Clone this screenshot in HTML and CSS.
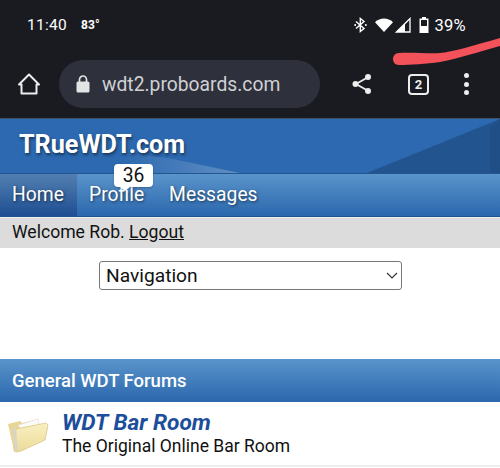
FILE: index.html
```html
<!DOCTYPE html>
<html lang="en">
<head>
    <meta charset="UTF-8">
    <meta name="viewport" content="width=device-width, initial-scale=1.0">
    <title>TRueWDT.com</title>
    <link rel="stylesheet" href="styles.css">
</head>
<body>
    <div class="chrome">
        <div class="status-bar">
            <div class="status-left">
                <span class="clock">11:40</span>
                <span class="temp">83°</span>
            </div>
            <div class="status-right">
                <svg class="ico-bt" width="13" height="16" viewBox="0 0 13 16"><path d="M2 4.500l8 7-3.700 3V1.500l3.700 3-8 7" fill="none" stroke="#fff" stroke-width="1.400"/><circle cx="1.200" cy="8" r="1" fill="#fff"/><circle cx="11.800" cy="8" r="1" fill="#fff"/></svg>
                <svg class="ico-wifi" width="18" height="14" viewBox="0 0 18 14"><path d="M0 4.200C5-.8 13-.8 18 4.200L9 14z" fill="#fff"/></svg>
                <svg class="ico-signal" width="16" height="16" viewBox="0 0 16 16"><path d="M15 1.500V15H1.500z" fill="none" stroke="#fff" stroke-width="1.300"/><path d="M10 6.500V15H1.500z" fill="#fff"/></svg>
                <svg class="ico-batt" width="10" height="16" viewBox="0 0 10 16"><path d="M3 0h4v1.500h2.500V16H.5V1.500H3z" fill="#fff"/><rect x="2" y="3" width="6" height="6" fill="#1a1b20"/></svg>
                <span class="batt-pct">39%</span>
            </div>
        </div>
        <div class="toolbar">
            <svg class="ico-home" width="24" height="24" viewBox="0 0 24 24"><path d="M2 12.500L12 2.500l10 10h-2.500v9h-15v-9z" fill="none" stroke="#eceded" stroke-width="2" stroke-linejoin="round"/></svg>
            <div class="url-pill">
                <svg width="14" height="18" viewBox="0 0 14 18"><rect x="0.500" y="6.500" width="13" height="11" rx="1.500" fill="#e3e4e6"/><path d="M3.500 7V4.500a3.500 3.500 0 0 1 7 0V7" fill="none" stroke="#e3e4e6" stroke-width="1.700"/></svg>
                <span class="url-text">wdt2.proboards.com</span>
            </div>
            <div class="toolbar-actions">
                <svg width="22" height="22" viewBox="0 0 22 22"><path d="M16.500 4.500L5 11l11.500 6.500" fill="none" stroke="#eceded" stroke-width="1.800"/><circle cx="17" cy="4" r="3" fill="#eceded"/><circle cx="4.500" cy="11" r="3" fill="#eceded"/><circle cx="17" cy="18" r="3" fill="#eceded"/></svg>
                <span class="tab-count">2</span>
                <span class="dots"><i></i><i></i><i></i></span>
            </div>
        </div>
        <svg class="scribble" width="110" height="32" viewBox="0 0 110 32"><path d="M9 17C22 16 40 18 50 17C62 16 82 10 110 2V10C88 16 70 22 50 26C36 28 20 29 9 29C1 29 1 17 9 17z" fill="#f4525a"/></svg>
    </div>

    <div class="banner">
        <div class="banner-shine"></div>
        <div class="banner-dark"></div>
        <div class="banner-dark-2"></div>
        <div class="site-title">TRueWDT.com</div>
    </div>

    <nav class="nav">
        <a class="nav-item active">Home</a>
        <a class="nav-item nav-profile">Profile<span class="bubble">36</span></a>
        <a class="nav-item">Messages</a>
    </nav>

    <div class="welcome">Welcome Rob. <a class="logout">Logout</a></div>

    <div class="nav-select-wrap">
        <div class="nav-select">
            <span>Navigation</span>
            <svg width="12" height="7" viewBox="0 0 12 7"><path d="M1 1l5 5 5-5" fill="none" stroke="#333" stroke-width="1.100"/></svg>
        </div>
    </div>

    <div class="section-title">General WDT Forums</div>
    <div class="board-row">
        <svg class="folder" width="42" height="38" viewBox="0 0 42 38">
            <defs>
                <linearGradient id="folderFront" x1="0" y1="0" x2="0" y2="1">
                    <stop offset="0" stop-color="#f9efc2"/>
                    <stop offset="1" stop-color="#ecdb98"/>
                </linearGradient>
            </defs>
            <path d="M1 9l12-3 2 2 14-3 3 18-24 13H7z" fill="#e9d596"/>
            <path d="M11 10l20-6 3 14-14 8z" fill="#fbfbf8" stroke="#ddd9cc" stroke-width="0.600"/>
            <path d="M9 14l30-6 2 2-3 15-24 11-5 1-2-1z" fill="url(#folderFront)" stroke="#d9c784" stroke-width="0.800"/>
            <path d="M5 12l4 2 2 21-3 1z" fill="#d9d5c5"/>
        </svg>
        <div class="board-info">
            <div class="board-name">WDT Bar Room</div>
            <div class="board-desc">The Original Online Bar Room</div>
        </div>
    </div>
</body>
</html>
```

FILE: styles.css
```css
html, body {
    margin: 0;
    padding: 0;
}
body {
    width: 500px;
    height: 468px;
    overflow: hidden;
    background-color: #fff;
    font-family: Roboto, "Liberation Sans", sans-serif;
    color: #111;
}

/* phone status bar + browser toolbar */
.chrome {
    position: relative;
    height: 118px;
    background-color: #1a1b20;
    border-bottom: 1px solid #3e4f6b;
    color: #fff;
}
.status-bar {
    height: 50px;
    margin-bottom: 10px;
    padding: 0 34px 0 27px;
    display: flex;
    justify-content: space-between;
    align-items: center;
}
.status-left {
    display: flex;
    align-items: center;
    gap: 14px;
}
.clock {
    font-size: 15.500px;
    letter-spacing: 0.300px;
}
.temp {
    font-size: 12px;
    font-weight: 700;
}
.status-right {
    display: flex;
    align-items: center;
}
.ico-bt { margin-right: 8px; }
.ico-wifi { margin-right: 2px; }
.ico-signal { margin-right: 8px; }
.ico-batt { margin-right: 5px; }
.batt-pct {
    font-size: 16.500px;
    letter-spacing: 0.300px;
}
.toolbar {
    height: 48px;
    padding: 0 26px 0 17px;
    display: flex;
    align-items: center;
}
.url-pill {
    width: 261px;
    height: 48px;
    margin-left: 18px;
    padding-left: 17px;
    box-sizing: border-box;
    display: flex;
    align-items: center;
    gap: 12px;
    background-color: #2e303b;
    border-radius: 24px;
}
.url-text {
    font-size: 19.300px;
    color: #d0d1d5;
}
.toolbar-actions {
    margin-left: 31px;
    flex: 1;
    display: flex;
    align-items: center;
    justify-content: space-between;
}
.tab-count {
    width: 17px;
    height: 17px;
    border: 2px solid #eceded;
    border-radius: 4px;
    font-size: 13px;
    font-weight: 700;
    line-height: 17px;
    text-align: center;
    color: #eceded;
}
.dots {
    display: flex;
    flex-direction: column;
    gap: 3.500px;
    margin-right: 5px;
}
.dots i {
    display: block;
    width: 5px;
    height: 5px;
    border-radius: 50%;
    background-color: #eceded;
}
.scribble {
    position: absolute;
    left: 390px;
    top: 36px;
}

/* forum header */
.banner {
    position: relative;
    height: 54px;
    background-color: #2c69b0;
    overflow: hidden;
}
.banner-shine {
    position: absolute;
    left: 120px;
    top: 0;
    width: 120px;
    height: 54px;
    background: linear-gradient(90deg, rgba(255,255,255,0), rgba(255,255,255,0.250));
    clip-path: polygon(0 62%, 40% 72%, 100% 100%, 0 100%);
}
.banner-dark {
    position: absolute;
    right: 0;
    top: 0;
    width: 133px;
    height: 54px;
    background-color: #22558f;
    clip-path: polygon(100% 0, 100% 100%, 0 100%);
}
.banner-dark-2 {
    position: absolute;
    right: 0;
    top: 0;
    width: 10px;
    height: 54px;
    background-color: #1f4f86;
    clip-path: polygon(100% 0, 100% 100%, 0 100%, 0 15%);
}
.site-title {
    position: relative;
    padding: 10px 0 0 19px;
    font-size: 25.200px;
    font-weight: 700;
    line-height: 32px;
    color: #fff;
    text-shadow: 1px 2px 3px rgba(0, 0, 0, 0.500);
}

.nav {
    height: 42px;
    display: flex;
    background: linear-gradient(#5a94cb, #2b67ad);
    border-top: 1px solid #23558f;
    border-bottom: 1px solid #20528c;
}
.nav-item {
    position: relative;
    padding: 0 12px;
    font-size: 19.300px;
    line-height: 42px;
    color: #fff;
    text-shadow: 1px 1px 3px rgba(0, 0, 0, 0.550);
}
.nav-item.active {
    width: 53px;
    background: linear-gradient(#527fb1, #1f4e92);
}
.nav-profile {
    margin-right: 1px;
}
.bubble {
    position: absolute;
    left: 37px;
    top: -10px;
    width: 39px;
    height: 23px;
    background-color: #fff;
    border-radius: 4px;
    font-size: 19.300px;
    line-height: 24px;
    text-align: center;
    color: #111;
    text-shadow: none;
    box-shadow: 0 1px 2px rgba(0, 0, 0, 0.250);
}
.bubble::after {
    content: "";
    position: absolute;
    left: 6px;
    bottom: -4px;
    border-left: 5px solid transparent;
    border-right: 5px solid transparent;
    border-top: 4px solid #fff;
}

.welcome {
    height: 30px;
    padding-left: 12px;
    background-color: #dcdcdc;
    border-top: 1px solid #eee;
    font-size: 17.600px;
    line-height: 29px;
}
.logout {
    text-decoration: underline;
}

.nav-select-wrap {
    height: 111px;
    padding-top: 13px;
    box-sizing: border-box;
    padding-left: 99px;
}
.nav-select {
    width: 303px;
    height: 29px;
    box-sizing: border-box;
    padding: 0 3px 0 6px;
    display: flex;
    align-items: center;
    justify-content: space-between;
    border: 1px solid #777;
    border-radius: 3px;
    font-size: 19.200px;
}

.section-title {
    height: 43px;
    padding-left: 12px;
    background: linear-gradient(#5a94cb, #2b67ad);
    font-size: 18.500px;
    font-weight: 500;
    line-height: 44px;
    color: #fff;
}
.board-row {
    height: 63px;
    display: flex;
    align-items: center;
    border-bottom: 2px solid #eee;
}
.folder {
    margin: 0 13px 0 7px;
}
.board-name {
    font-size: 22.700px;
    font-weight: 700;
    font-style: italic;
    line-height: 25px;
    color: #1c4e9b;
}
.board-desc {
    font-size: 17.500px;
    line-height: 22px;
}
```
